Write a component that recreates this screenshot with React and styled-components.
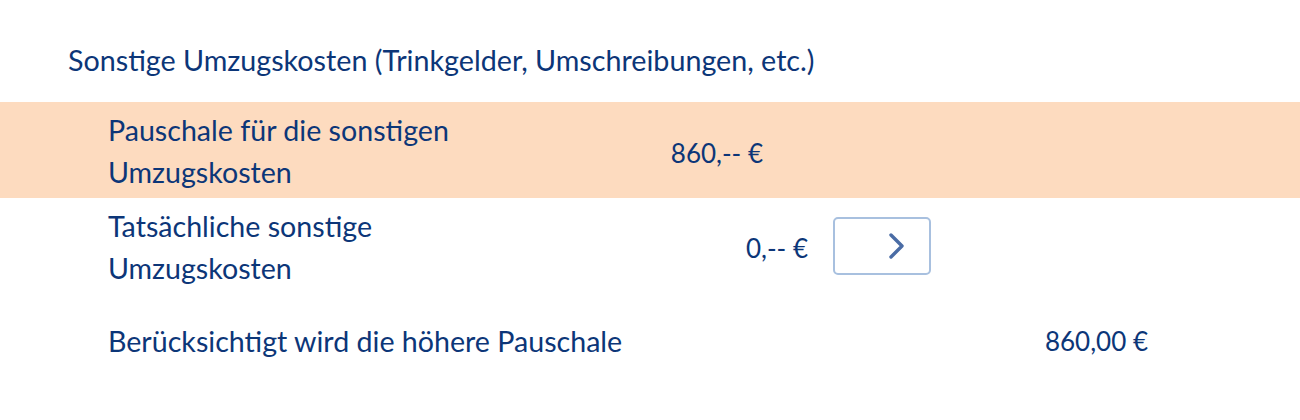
import React from "react";
import styled, { createGlobalStyle } from "styled-components";

const Global = createGlobalStyle`
  html, body { margin: 0; padding: 0; background: #fff; }
  body { font-family: "Lato", "Noto Sans", sans-serif; color: #0c3678; }
`;

const Page = styled.div`
  width: 1300px;
  padding-top: 39px;
`;

const Heading = styled.h2`
  margin: 0 0 21px 0;
  padding-left: 68px;
  font-size: 28.7px;
  font-weight: 400;
  line-height: 42px;
`;

const Row = styled.div`
  display: grid;
  grid-template-columns: 108px 520px ${(p) => p.$valueWidth}px auto;
  align-items: center;
  background: ${(p) => (p.$highlight ? "#fddbbf" : "transparent")};
  padding: ${(p) => p.$pad};
`;

const Label = styled.div`
  grid-column: 2;
  font-size: 28.6px;
  line-height: 42px;
  white-space: nowrap;
`;

const Value = styled.div`
  grid-column: 3;
  text-align: right;
  font-size: 26px;
  line-height: 42px;
  padding-top: ${(p) => p.$dy || 0}px;
`;

const Action = styled.div`
  grid-column: 4;
  padding-left: 25px;
  margin-top: -2px;
`;

const NextButton = styled.button`
  box-sizing: border-box;
  width: 98px;
  height: 58px;
  border: 2px solid #a8c0df;
  border-radius: 5px;
  background: #fff;
  display: flex;
  align-items: center;
  justify-content: center;
  padding: 0 0 0 30px;
  cursor: pointer;
`;

const Chevron = () => (
  <svg width="18" height="28" viewBox="0 0 18 28">
    <path d="M3 3 L14 14 L3 25" fill="none" stroke="#4a6ca5" strokeWidth="3.4" strokeLinecap="round" strokeLinejoin="round" />
  </svg>
);

export default function App() {
  return (
    <>
      <Global />
      <Page>
        <Heading>Sonstige Umzugskosten (Trinkgelder, Umschreibungen, etc.)</Heading>
        <Row $highlight $valueWidth={135} $pad="7px 0 5px 0">
          <Label>
            Pauschale für die sonstigen
            <br />
            Umzugskosten
          </Label>
          <Value $dy={4}>860,-- €</Value>
        </Row>
        <Row $valueWidth={180} $pad="7px 0 31px 0">
          <Label>
            Tatsächliche sonstige
            <br />
            Umzugskosten
          </Label>
          <Value $dy={2}>0,-- €</Value>
          <Action>
            <NextButton aria-label="Weiter">
              <Chevron />
            </NextButton>
          </Action>
        </Row>
        <Row $valueWidth={520} $pad="0">
          <Label>Berücksichtigt wird die höhere Pauschale</Label>
          <Value>860,00 €</Value>
        </Row>
      </Page>
    </>
  );
}
